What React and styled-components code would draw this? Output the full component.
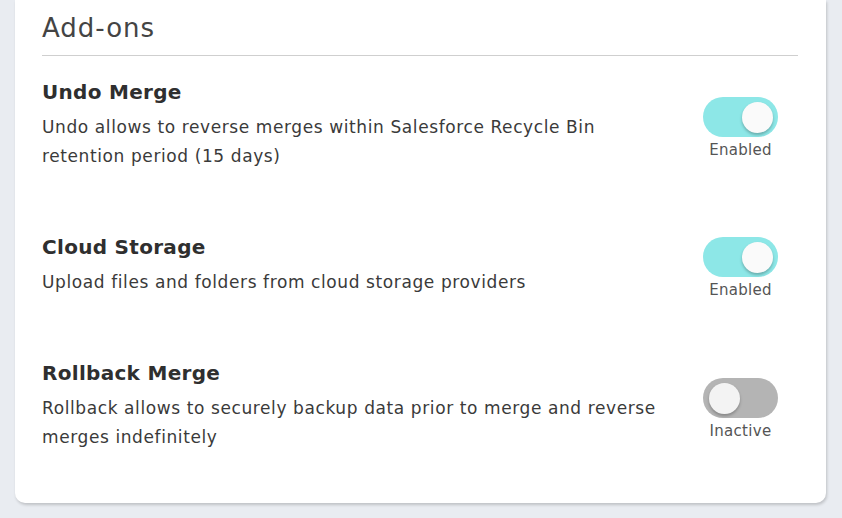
import React, { useState } from "react";
import styled, { createGlobalStyle } from "styled-components";

const GlobalStyle = createGlobalStyle`
  html, body {
    margin: 0;
    padding: 0;
    background: #e9ecf1;
  }
  body {
    font-family: "DejaVu Sans", "Noto Sans", sans-serif;
  }
`;

const ADDONS = [
  {
    id: "undo",
    name: "Undo Merge",
    description:
      "Undo allows to reverse merges within Salesforce Recycle Bin retention period (15 days)",
    enabled: true,
  },
  {
    id: "cloud",
    name: "Cloud Storage",
    description: "Upload files and folders from cloud storage providers",
    enabled: true,
  },
  {
    id: "rollback",
    name: "Rollback Merge",
    description:
      "Rollback allows to securely backup data prior to merge and reverse merges indefinitely",
    enabled: false,
  },
];

const Toggle = ({ checked, onChange }) => (
  <StyledToggleWrapper>
    <StyledTrack
      type="button"
      role="switch"
      aria-checked={checked}
      $checked={checked}
      onClick={() => onChange(!checked)}
    >
      <StyledKnob $checked={checked} />
    </StyledTrack>
    <StyledToggleLabel>{checked ? "Enabled" : "Inactive"}</StyledToggleLabel>
  </StyledToggleWrapper>
);

const AddonRow = ({ name, description, enabled, onToggle }) => (
  <StyledRow>
    <StyledText>
      <StyledName>{name}</StyledName>
      <StyledDescription>{description}</StyledDescription>
    </StyledText>
    <Toggle checked={enabled} onChange={onToggle} />
  </StyledRow>
);

export default function App() {
  const [addons, setAddons] = useState(ADDONS);

  const onToggle = (id) => (value) => {
    setAddons((list) =>
      list.map((a) => (a.id === id ? { ...a, enabled: value } : a))
    );
  };

  return (
    <>
      <GlobalStyle />
      <StyledPage>
        <StyledCard>
          <StyledHeader>Add-ons</StyledHeader>
          <StyledList>
            {addons.map((a) => (
              <AddonRow key={a.id} {...a} onToggle={onToggle(a.id)} />
            ))}
          </StyledList>
        </StyledCard>
      </StyledPage>
    </>
  );
}

const StyledPage = styled.div`
  padding: 0 16px 15px 15px;
`;

const StyledCard = styled.div`
  background: #ffffff;
  border-radius: 0 0 10px 10px;
  box-shadow: 1px 2px 3px rgba(0, 0, 0, 0.18);
  padding: 0 28px 51px 27px;
`;

const StyledHeader = styled.h2`
  margin: 0;
  padding: 11px 0 10px;
  font-size: 26px;
  line-height: 34px;
  font-weight: 400;
  letter-spacing: 1px;
  color: #444444;
  border-bottom: 1px solid #cfcfcf;
`;

const StyledList = styled.div`
  display: flex;
  flex-direction: column;
  gap: 60px;
  padding-top: 22px;
`;

const StyledRow = styled.div`
  display: flex;
  align-items: center;
  justify-content: space-between;
`;

const StyledText = styled.div`
  display: flex;
  flex-direction: column;
  gap: 7px;
  max-width: 630px;
`;

const StyledName = styled.div`
  font-size: 20px;
  line-height: 28px;
  font-weight: 700;
  letter-spacing: 0.3px;
  color: #2f2f2f;
`;

const StyledDescription = styled.div`
  font-size: 17px;
  line-height: 29px;
  letter-spacing: 0.6px;
  color: #3a3a3a;
`;

const StyledToggleWrapper = styled.div`
  display: flex;
  flex-direction: column;
  align-items: center;
  gap: 4px;
  margin-right: 20px;
  padding-top: 6px;
`;

const StyledTrack = styled.button`
  position: relative;
  width: 75px;
  height: 40px;
  padding: 0;
  border: none;
  border-radius: 20px;
  cursor: pointer;
  background: ${(p) => (p.$checked ? "#8de7e7" : "#b4b4b4")};
`;

const StyledKnob = styled.span`
  position: absolute;
  top: 5px;
  left: ${(p) => (p.$checked ? "39px" : "6px")};
  width: 31px;
  height: 31px;
  border-radius: 50%;
  background: ${(p) => (p.$checked ? "#fafafa" : "#f3f3f3")};
  box-shadow: 0 2px 3px rgba(0, 0, 0, 0.25);
`;

const StyledToggleLabel = styled.span`
  font-size: 15px;
  line-height: 18px;
  letter-spacing: 0.3px;
  color: #555555;
`;
